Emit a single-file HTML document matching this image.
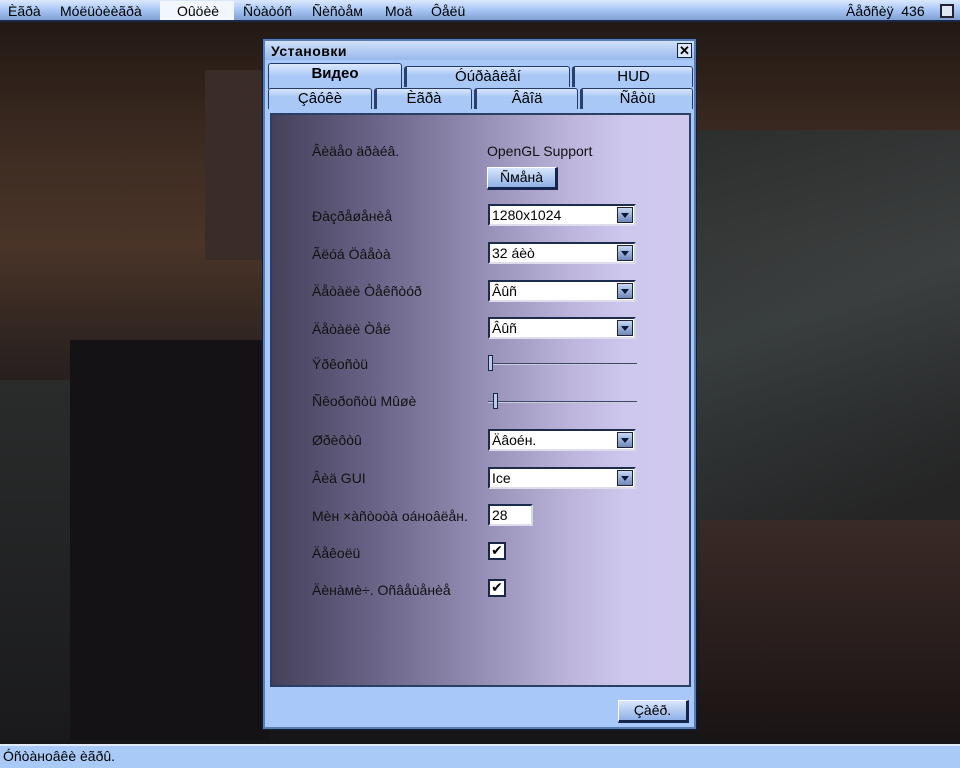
<!DOCTYPE html>
<html><head><meta charset="utf-8"><style>
*{margin:0;padding:0;box-sizing:border-box}
body{width:960px;height:768px;overflow:hidden;position:relative;font-family:"Liberation Sans",sans-serif;font-size:14px;color:#000;
background:linear-gradient(180deg,#1e1612 0%,#3e2c22 20%,#4a3428 32%,#2e2420 45%,#1c1a1c 55%,#222226 75%,#141416 100%)}
.abs{position:absolute}
.menu{left:0;top:0;width:960px;height:22px;background:linear-gradient(#dbe8fc,#a8c6f4 50%,#7f9fd2);border-bottom:2px solid #1a2a48}
.menu span{position:absolute;top:3px;font-size:14px}
.win{left:263px;top:39px;width:433px;height:690px;background:#a7c8f8;border:2px solid #5a7cb0;box-shadow:0 0 0 1px #10203a}
.title{left:0;top:0;width:429px;height:19px;background:linear-gradient(#cfe0fb,#98b9ec);font-weight:bold;font-size:14px;padding:2px 6px;letter-spacing:0.5px}
.x{right:2px;top:2px;width:15px;height:15px;background:#dfe8f8;border:1px solid #123;font:bold 13px/13px "Liberation Sans";text-align:center}
.tab{height:21px;background:linear-gradient(#d8e6fc,#a9c8f6 40%);border:1px solid #243a66;border-bottom:none;border-left:3px solid #2a3f6a;text-align:center;font-size:15px;line-height:20px;border-radius:3px 3px 0 0}
.panel{left:5px;top:72px;width:421px;height:574px;border:2px solid #2c3e66;background:linear-gradient(90deg,#45405a 0%,#6a6488 25%,#948eb4 50%,#bdb5dc 72%,#cfc8ee 85%,#d0c9ee 100%)}
.lbl{position:absolute;left:312px;font-size:14px;color:#111}
.dd{position:absolute;left:488px;width:148px;height:22px;background:#fff;border:2px solid #1e2c4c;border-right-color:#cdd;border-bottom-color:#dde;font-size:14px;padding:1px 2px}
.dd i{position:absolute;right:1px;top:1px;width:16px;height:16px;background:linear-gradient(#c8d8f4,#6f88b8);border:1px solid #223}
.dd i:after{content:"";position:absolute;left:3px;top:5px;border:4px solid transparent;border-top:5px solid #0b1a3a}
.sl{position:absolute;left:488px;width:149px;height:2px;background:#3a4a6a;border-bottom:1px solid #ccd}
.sl b{position:absolute;top:-8px;width:5px;height:16px;background:#b8cbee;border:1px solid #1a2444}
.cb{position:absolute;left:488px;width:18px;height:18px;background:#fff;border:2px solid #1a2444;font:bold 14px/14px "DejaVu Sans";text-align:center}
.btn{position:absolute;background:linear-gradient(#d8e6fc,#8fb0e6);border:1px solid #fff;border-right:3px solid #14244a;border-bottom:3px solid #14244a;text-align:center;font-size:14px}
.status{left:0;top:744px;width:960px;height:24px;background:#a9c9f7;border-top:2px solid #dfeafc;font-size:14px;padding:2px 3px}
</style></head><body>
<div class="abs" style="left:690px;top:130px;width:270px;height:470px;background:linear-gradient(160deg,#2a2e30,#3a4244 40%,#262626 80%);opacity:.85"></div>
<div class="abs" style="left:0;top:380px;width:270px;height:360px;background:linear-gradient(#2a2c2c,#1a1a1c)"></div>
<div class="abs" style="left:70px;top:340px;width:200px;height:400px;background:#141214"></div>
<div class="abs" style="left:700px;top:520px;width:260px;height:220px;background:linear-gradient(#3a2a26,#1a1414)"></div>
<div class="abs" style="left:205px;top:70px;width:70px;height:190px;background:#3a2c28"></div>
<div class="abs menu">
<span style="left:8px">Èãðà</span><span style="left:60px">Móëüòèèãðà</span>
<span style="left:160px;top:1px;width:74px;height:19px;background:#f2f6fd"></span><span style="left:177px">Oûöèè</span>
<span style="left:243px">Ñòàòóñ</span><span style="left:312px">Ñèñòåм</span><span style="left:385px">Moä</span><span style="left:431px">Ôåëü</span>
<span style="left:846px">Âåðñèÿ&nbsp; 436</span>
<span style="left:940px;top:4px;width:14px;height:14px;background:#dfe6f4;border:2px solid #223"></span>
</div>
<div class="abs win">
<div class="abs title">Установки</div><div class="abs x">✕</div>
<div class="abs tab" style="left:3px;top:22px;width:134px;height:26px;font-weight:bold;border-left:1px solid #243a66;background:linear-gradient(#dce8fc,#a9c8f6 50%)">Видео</div>
<div class="abs tab" style="left:139px;top:25px;width:166px">Óúðàâëåí</div>
<div class="abs tab" style="left:307px;top:25px;width:121px">HUD</div>
<div class="abs tab" style="left:3px;top:47px;width:104px;border-left:1px solid #243a66">Çâóêè</div>
<div class="abs tab" style="left:109px;top:47px;width:98px">Èãðà</div>
<div class="abs tab" style="left:209px;top:47px;width:104px">Ââîä</div>
<div class="abs tab" style="left:315px;top:47px;width:113px">Ñåòü</div>
<div class="abs panel"></div>
<div class="btn" style="left:353px;top:659px;width:71px;height:23px;line-height:19px">Çàêð.</div>
</div>
<div class="lbl" style="top:143px">Âèäåo äðàéâ.</div><div class="lbl" style="left:487px;top:143px">OpenGL Support</div>
<div class="btn" style="left:487px;top:167px;width:71px;height:23px;line-height:19px">Ñмåнà</div>
<div class="lbl" style="top:208px">Ðàçðåøåнèå</div><div class="dd" style="top:204px">1280x1024<i></i></div>
<div class="lbl" style="top:246px">Ãëóá Öâåòà</div><div class="dd" style="top:242px">32 áèò<i></i></div>
<div class="lbl" style="top:283px">Äåòàëè Òåêñòóð</div><div class="dd" style="top:280px">Âûñ<i></i></div>
<div class="lbl" style="top:321px">Äåòàëè Òåë</div><div class="dd" style="top:317px">Âûñ<i></i></div>
<div class="lbl" style="top:356px">Ÿðêoñòü</div><div class="sl" style="top:363px"><b style="left:0"></b></div>
<div class="lbl" style="top:393px">Ñêoðoñòü Mûøè</div><div class="sl" style="top:401px"><b style="left:5px"></b></div>
<div class="lbl" style="top:432px">Øðèôòû</div><div class="dd" style="top:429px">Äâoéн.<i></i></div>
<div class="lbl" style="top:470px">Âèä GUI</div><div class="dd" style="top:467px">Ice<i></i></div>
<div class="lbl" style="top:508px">Mèн ×àñòoòà oáнoâëåн.</div><div class="dd" style="top:504px;width:45px">28</div>
<div class="lbl" style="top:545px">Äåêoëü</div><div class="cb" style="top:542px">✔</div>
<div class="lbl" style="top:582px">Äèнàмè÷. Oñâåùåнèå</div><div class="cb" style="top:579px">✔</div>
<div class="abs status">Óñòàнoâêè èãðû.</div>
</body></html>
